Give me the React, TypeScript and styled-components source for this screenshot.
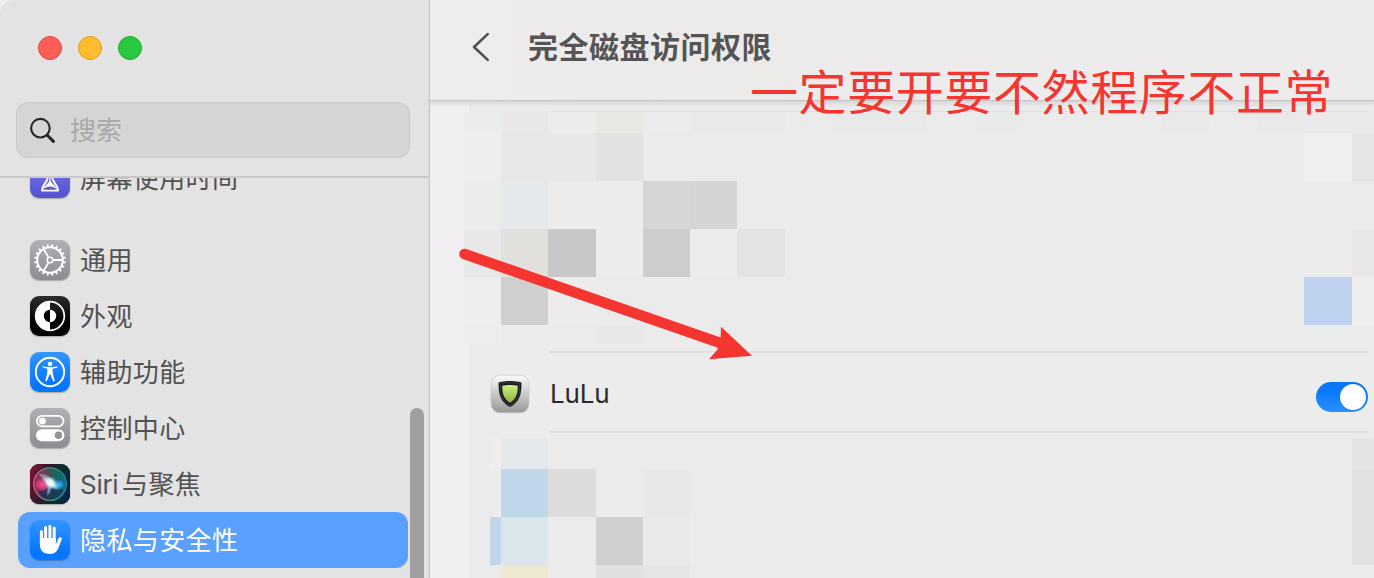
import React from 'react';
import styled, { createGlobalStyle } from 'styled-components';

const Global = createGlobalStyle`
  * { box-sizing: border-box; }
  html, body { margin: 0; padding: 0; background: #e3e3e3; }
  body { overflow: hidden; font-family: Inter, "Noto Sans CJK SC", sans-serif; }
  svg { display: block; }
`;

const Window = styled.div`
  position: relative;
  display: flex;
  width: 1374px;
  height: 578px;
  overflow: hidden;
  background: #f0eef0;
`;

const Sidebar = styled.aside`
  display: flex;
  flex-direction: column;
  width: 430px;
  height: 578px;
  flex: none;
  background: #e3e3e3;
  border-right: 1px solid #c9c7c8;
  border-top-left-radius: 14px;
  box-shadow: inset -1px 0 0 #dad9d9;
`;

const SidebarTop = styled.div`
  display: flex;
  flex-direction: column;
  height: 178px;
  width: 428px;
  flex: none;
  border-bottom: 2px solid #cac9ca;
`;

const Lights = styled.div`
  display: flex;
  gap: 16px;
  padding: 36px 0 42px 38px;
`;

const Light = styled.span<{ $fill: string; $edge: string }>`
  width: 24px;
  height: 24px;
  border-radius: 50%;
  background: ${p => p.$fill};
  border: 1px solid ${p => p.$edge};
`;

const Search = styled.div`
  display: flex;
  align-items: center;
  gap: 13px;
  width: 394px;
  height: 56px;
  margin-left: 16px;
  padding-left: 13px;
  border: 1px solid #c9c9c9;
  border-radius: 12px;
  background: #d5d5d5;
  color: #a9a9a9;
  font-size: 26px;
  line-height: 54px;
`;

const SearchLabel = styled.span`
  height: 54px;
  padding-top: 1px;
`;

const NavArea = styled.div`
  display: flex;
  flex: 1;
  min-height: 0;
  justify-content: space-between;
  overflow: hidden;
`;

const Nav = styled.nav`
  display: flex;
  flex-direction: column;
  width: 390px;
  margin-left: 18px;
  margin-top: -28px;
`;

const NavItem = styled.div<{ $active?: boolean; $gapAfter?: boolean }>`
  display: flex;
  flex: none;
  align-items: center;
  gap: 10px;
  height: 56px;
  padding-left: 12px;
  margin-bottom: ${p => (p.$gapAfter ? 26 : 0)}px;
  border-radius: 12px;
  background: ${p => (p.$active ? '#5aa0fe' : 'transparent')};
  color: ${p => (p.$active ? '#fff' : '#525252')};
  font-size: 26px;
  letter-spacing: 0.4px;
  line-height: 58px;
  white-space: pre;
`;

const NavLabel = styled.span`
  height: 56px;
`;

const Latin = styled.span`
  margin-right: 1px;
  letter-spacing: -0.3px;
`;

const IconTile = styled.span<{ $bg: string }>`
  width: 40px;
  height: 40px;
  border-radius: 9px;
  background: ${p => p.$bg};
  box-shadow: 0 1px 1.5px rgba(0, 0, 0, 0.28);
  overflow: hidden;
`;

const Scrollbar = styled.div`
  width: 14px;
  height: 200px;
  margin: 230px 5px 0 0;
  border-radius: 7px;
  background: #a09e9f;
`;

const Main = styled.main`
  display: flex;
  flex-direction: column;
  flex: 1;
  min-width: 0;
`;

const Header = styled.header`
  display: flex;
  align-items: center;
  flex: none;
  height: 101px;
  padding: 0 0 6px 42px;
  gap: 38px;
  border-bottom: 1px solid #c5c4c5;
  background: linear-gradient(90deg, #eeecee 0, #ecebea 300px, #edebec 420px);
`;

const Title = styled.h1`
  margin: 0;
  color: #555;
  font-size: 30px;
  line-height: 44px;
  font-weight: 700;
  letter-spacing: 0.5px;
`;

const Content = styled.div`
  display: flex;
  flex-direction: column;
  flex: 1;
  background: linear-gradient(#d9d8d9 0, rgba(236, 235, 236, 0) 6px);
`;

const CardSlice = styled.div<{ $height: number }>`
  flex: none;
  height: ${p => p.$height}px;
  margin-left: 40px;
  padding: 0 6px 0 79px;
  border-left: 1px solid #dfdfdf;
  background: rgba(235, 235, 235, 0.9);
`;

const CardTop = styled(CardSlice)`
  background: linear-gradient(rgba(215, 214, 215, 0.8), rgba(235, 235, 235, 0.9) 6px);
`;

const AppSlice = styled(CardSlice)`
  padding-top: 7px;
`;

const Rule = styled.div<{ $offset?: number; $thick?: number }>`
  height: ${p => p.$thick ?? 2}px;
  margin-top: ${p => p.$offset ?? 0}px;
  background: #e1e1e1;
`;

const AppRow = styled.div`
  display: flex;
  align-items: center;
  height: 78px;
  margin-left: -60px;
  padding-top: 3px;
`;

const AppName = styled.span`
  flex: 1;
  margin-left: 20px;
  color: #2a2a2a;
  font-size: 26px;
  line-height: 40px;
  letter-spacing: -0.2px;
`;

const Toggle = styled.span`
  display: flex;
  justify-content: flex-end;
  width: 52px;
  height: 30px;
  margin-top: 7px;
  padding: 2px;
  border-radius: 15px;
  background: linear-gradient(#0a76f6, #0a7aff 35%, #2a90ff);
`;

const Knob = styled.span`
  width: 26px;
  height: 26px;
  border-radius: 50%;
  background: #fff;
  box-shadow: 0 0 1px rgba(0, 0, 0, 0.4);
`;

const Mosaic = styled.div<{ $left: number; $first: number; $rows: string }>`
  display: grid;
  flex: none;
  margin-left: ${p => p.$left}px;
  grid-template-columns: ${p => p.$first}px 47px 48px 47px 47px 47px 48px 47px 47px 48px 47px 47px 48px 47px 47px 47px 47px 47px 48px 22px;
  grid-template-rows: ${p => p.$rows};
  background: #ecebec;
`;

const Pixel = styled.span<{ $row: number; $col: number; $span?: number; $color: string }>`
  grid-row: ${p => p.$row};
  grid-column: ${p => p.$col} / span ${p => p.$span ?? 1};
  background: ${p => p.$color};
`;

const SecondBlock = styled.div`
  display: flex;
  flex: 1;
  flex-direction: column;
  margin-left: 40px;
  border-left: 1px solid #dfdfdf;
  background: #ebebeb;
`;

const Arrow = styled.svg`
  position: absolute;
  left: 450px;
  top: 240px;
`;

const Note = styled.div`
  position: absolute;
  left: 750px;
  top: 54px;
  color: #f5352f;
  font-family: "Noto Sans CJK SC", sans-serif;
  font-size: 48px;
  font-weight: 400;
  line-height: 70px;
  letter-spacing: 0.6px;
  white-space: nowrap;
`;

type Cell = [row: number, col: number, color: string, span?: number];

const upperCells: Cell[] = [
  [1, 1, '#ebecec'], [1, 2, '#e9e7e8'], [1, 3, '#edebec'], [1, 4, '#e8e7e4'], [1, 5, '#edebec'], [1, 6, '#e8e9e8', 2],
  [1, 9, '#e8e9e9', 2], [1, 12, '#e9eaea'], [1, 16, '#e8e9e9'], [1, 18, '#e8e9e8'], [1, 19, '#ebe9ea'], [1, 20, '#e9e9e9'],
  [2, 1, '#efedee'], [2, 2, '#e8e6e7'], [2, 3, '#e8e8e8'], [2, 4, '#e3e1e2'], [2, 5, '#ebebeb'], [2, 19, '#efefef'], [2, 20, '#e6e4e5'],
  [3, 1, '#ebecec'], [3, 2, '#e6e9eb'], [3, 3, '#edebec', 2], [3, 5, '#d6d6d6'], [3, 6, '#d6d3d4'],
  [4, 1, '#e7e8e7'], [4, 2, '#e1e0dd'], [4, 3, '#c8c8c8'], [4, 4, '#edebec'], [4, 5, '#cfcccd'], [4, 6, '#edebec'], [4, 7, '#e3e3e3'], [4, 20, '#e8e6e7'],
  [5, 1, '#efedee'], [5, 2, '#cfcfcf'], [5, 3, '#edebec'], [5, 19, '#bfd2f0'], [5, 20, '#efedee'],
  [6, 1, '#eeecee'], [6, 2, '#ecebeb'], [6, 4, '#e9e7e8'], [6, 20, '#ebebeb'],
];

const lowerCells: Cell[] = [
  [1, 1, '#efedee'], [1, 2, '#e4e8ea'], [1, 20, '#e5e3e4'],
  [2, 1, '#ececec'], [2, 2, '#c0d6ea'], [2, 3, '#dedbdc'], [2, 5, '#e7e8e7'], [2, 20, '#e2e1e1'],
  [3, 1, '#c2d6e8'], [3, 2, '#dae5ec'], [3, 4, '#cfcfcf'], [3, 5, '#eae8e9'], [3, 20, '#e2e1e1'],
  [4, 2, '#eee8d0'], [4, 4, '#e1dfe0'], [4, 5, '#e6e4e5'],
];

const Pixels = ({ cells }: { cells: Cell[] }) => (
  <>
    {cells.map(([row, col, color, span]) => (
      <Pixel key={`${row}-${col}`} $row={row} $col={col} $color={color} $span={span} />
    ))}
  </>
);

const SearchIcon = () => (
  <svg width="27" height="27" viewBox="0 0 27 27" fill="none" stroke="#262626" strokeLinecap="round">
    <circle cx="10.4" cy="11.2" r="9.3" strokeWidth="2.1" />
    <path d="M17.3 18.2 L23.4 24.4" strokeWidth="3" />
  </svg>
);

const HourglassIcon = () => (
  <svg width="40" height="40" viewBox="0 0 40 40" fill="none" stroke="#fff" strokeWidth="1.9" strokeLinejoin="round">
    <path d="M12 7 H28 M13 7 C13 13 17.8 15 17.8 19 C17.8 24.5 12 26 12 32.6 H28 C28 26 22.2 24.5 22.2 19 C22.2 15 27 13 27 7" />
    <path d="M20 17 V24" strokeWidth="1.2" />
    <path d="M20 22 C20.6 25 26 27.5 26.6 31 C23 27.6 17 27.6 13.4 31 C14 27.5 19.4 25 20 22 Z" fill="#fff" stroke="none" />
  </svg>
);

const GearIcon = () => (
  <svg width="40" height="40" viewBox="0 0 40 40" fill="none" stroke="#fff">
    <circle cx="20" cy="20" r="12.8" strokeWidth="2" />
    {Array.from({ length: 20 }, (_, i) => (
      <path key={i} d="M32.6 18.7 L35.9 19.3 V20.7 L32.6 21.3 Z" fill="#fff" stroke="none" transform={`rotate(${i * 18 + 9} 20 20)`} />
    ))}
    <circle cx="20" cy="20" r="2.8" strokeWidth="1.6" />
    <path d="M22.8 20 H32.6 M18.6 17.6 L13.7 9.1 M18.6 22.4 L13.7 30.9" strokeWidth="1.9" />
  </svg>
);

const AppearanceIcon = () => (
  <svg width="40" height="40" viewBox="0 0 40 40">
    <circle cx="20" cy="20" r="14.3" fill="none" stroke="#fff" strokeWidth="1.7" />
    <path d="M20 5.5 A14.5 14.5 0 0 0 20 34.5 Z" fill="#fff" />
    <path d="M20 13.8 A6.2 6.2 0 0 0 20 26.2 Z" fill="#000" />
    <path d="M20 13.8 A6.2 6.2 0 0 1 20 26.2 Z" fill="#fff" />
  </svg>
);

const AccessibilityIcon = () => (
  <svg width="40" height="40" viewBox="0 0 40 40">
    <circle cx="20" cy="20" r="14.2" fill="none" stroke="#fff" strokeWidth="1.9" />
    <circle cx="20" cy="12" r="2.3" fill="#fff" />
    <path
      d="M12.6 15 C12.6 14.4 13.1 14.3 13.6 14.4 C18 15.2 22 15.2 26.4 14.4 C26.9 14.3 27.4 14.4 27.4 15 C27.4 15.5 27.1 15.7 26.6 15.8 L22.6 16.7 C22.5 20 22.8 22 24.6 28.2 C24.8 28.9 24.5 29.3 24 29.4 C23.5 29.5 23.1 29.2 22.9 28.6 L20.4 22.6 H19.6 L17.1 28.6 C16.9 29.2 16.5 29.5 16 29.4 C15.5 29.3 15.2 28.9 15.4 28.2 C17.2 22 17.5 20 17.4 16.7 L13.4 15.8 C12.9 15.7 12.6 15.5 12.6 15 Z"
      fill="#fff"
    />
  </svg>
);

const ControlIcon = () => (
  <svg width="40" height="40" viewBox="0 0 40 40">
    <rect x="6.9" y="7.9" width="26.6" height="10.4" rx="5.2" fill="none" stroke="#fff" strokeWidth="1.8" />
    <circle cx="12.4" cy="13.1" r="3.4" fill="#fff" />
    <rect x="6" y="21.3" width="28.4" height="12" rx="6" fill="#fff" />
    <circle cx="28.5" cy="27.2" r="3.7" fill="#929196" />
  </svg>
);

const SiriIcon = () => (
  <svg width="40" height="40" viewBox="0 0 40 40">
    <defs>
      <linearGradient id="siriBase" x1="0" y1="0.25" x2="1" y2="0.6">
        <stop offset="0" stopColor="#7d1136" />
        <stop offset="0.42" stopColor="#241a2c" />
        <stop offset="0.75" stopColor="#04312f" />
        <stop offset="1" stopColor="#062446" />
      </linearGradient>
      <linearGradient id="siriOrb" x1="0" y1="0.45" x2="1" y2="0.55">
        <stop offset="0" stopColor="#c42f68" />
        <stop offset="0.4" stopColor="#64606e" />
        <stop offset="0.65" stopColor="#128a72" />
        <stop offset="1" stopColor="#1c7fae" />
      </linearGradient>
      <linearGradient id="siriRing" x1="0" y1="0.6" x2="1" y2="0.4">
        <stop offset="0" stopColor="#e0668c" />
        <stop offset="0.5" stopColor="#3fae88" />
        <stop offset="1" stopColor="#2c88a4" />
      </linearGradient>
      <radialGradient id="siriGlow">
        <stop offset="0" stopColor="#fff" />
        <stop offset="0.35" stopColor="#e9fbff" stopOpacity="0.85" />
        <stop offset="1" stopColor="#b9e4ff" stopOpacity="0" />
      </radialGradient>
      <radialGradient id="siriPink">
        <stop offset="0" stopColor="#ff5c8c" stopOpacity="0.95" />
        <stop offset="0.7" stopColor="#e83a78" stopOpacity="0.7" />
        <stop offset="1" stopColor="#d0306c" stopOpacity="0.1" />
      </radialGradient>
      <radialGradient id="siriBlue">
        <stop offset="0" stopColor="#4cc4f4" stopOpacity="0.9" />
        <stop offset="0.7" stopColor="#238cdc" stopOpacity="0.7" />
        <stop offset="1" stopColor="#1c74c8" stopOpacity="0.1" />
      </radialGradient>
    </defs>
    <rect width="40" height="40" fill="url(#siriBase)" />
    <circle cx="20" cy="20" r="16.3" fill="url(#siriOrb)" fillOpacity="0.65" stroke="url(#siriRing)" strokeWidth="1.1" />
    <path d="M8 26 C12 29 17 25 20 20 C24 25 29 27 33.5 25 C31 33 25 35.6 20 35.6 C14 35.6 10 32 8 26 Z" fill="#182a55" fillOpacity="0.7" />
    <ellipse cx="12.5" cy="20.5" rx="8" ry="6.6" fill="url(#siriPink)" />
    <ellipse cx="28.3" cy="20.5" rx="6.8" ry="5.2" fill="url(#siriBlue)" />
    <path d="M9 10 C17 9 22 14 24 20 C17 20 12 16 9 10 Z" fill="#e0dfe4" fillOpacity="0.35" />
    <ellipse cx="20.5" cy="19" rx="11" ry="4.6" fill="url(#siriGlow)" transform="rotate(38 20.5 19)" />
    <ellipse cx="20.5" cy="19" rx="6.6" ry="7" fill="url(#siriGlow)" />
    <ellipse cx="19" cy="26" rx="2.4" ry="7" fill="url(#siriGlow)" fillOpacity="0.5" transform="rotate(14 19 26)" />
  </svg>
);

const HandIcon = () => (
  <svg width="40" height="40" viewBox="0 0 40 40" fill="none" stroke="#fff" strokeLinecap="round">
    <path d="M11.4 11.6 V24 M15.6 7.4 V22 M19.9 6.2 V22 M24.2 8 V22" strokeWidth="3" />
    <path d="M9.9 18 H25.7 V24.4 L28.6 18 C29.3 16.6 32.4 16.9 31.8 18.9 L28.6 27.6 C26.6 32.4 24.2 34 20 34 C13 34 9.9 30.4 9.9 24 Z" fill="#fff" stroke="none" />
  </svg>
);

const ShieldIcon = () => (
  <svg width="40" height="40" viewBox="0 0 40 40">
    <defs>
      <linearGradient id="plate" x1="0" y1="0" x2="0" y2="1">
        <stop offset="0" stopColor="#fafafa" />
        <stop offset="0.5" stopColor="#c9c9c9" />
        <stop offset="1" stopColor="#989898" />
      </linearGradient>
      <linearGradient id="leaf" x1="0" y1="0" x2="0" y2="1">
        <stop offset="0" stopColor="#cdf07c" />
        <stop offset="1" stopColor="#8db344" />
      </linearGradient>
    </defs>
    <rect x="1" y="1.2" width="38" height="37.6" rx="9" fill="url(#plate)" stroke="#c4c4c4" strokeWidth="0.6" />
    <path d="M20 7 C24 7 28 7.6 31.4 8.4 C31.8 20 29.5 28.2 20 33 C10.5 28.2 8.2 20 8.6 8.4 C12 7.6 16 7 20 7 Z" fill="#1d1d20" />
    <path d="M20 8.6 C24 8.6 27 9.1 29.8 9.7 C30 20 28 27 20 31.3 C12 27 10 20 10.2 9.7 C13 9.1 16 8.6 20 8.6 Z" fill="none" stroke="#46464a" strokeWidth="0.7" />
    <path d="M20 10.9 C23 10.9 25.4 11.2 27.7 11.6 C27.9 19.5 26.3 25 20 28.8 C13.7 25 12.1 19.5 12.3 11.6 C14.6 11.2 17 10.9 20 10.9 Z" fill="url(#leaf)" />
  </svg>
);

const items = [
  { label: '屏幕使用时间', bg: 'linear-gradient(#7d7be8, #5450d2)', icon: <HourglassIcon />, gapAfter: true },
  { label: '通用', bg: 'linear-gradient(#b1b0b5, #8c8b91)', icon: <GearIcon /> },
  { label: '外观', bg: 'linear-gradient(#2c2c2c, #000 70%)', icon: <AppearanceIcon /> },
  { label: '辅助功能', bg: 'linear-gradient(#3395ff, #0576ff 80%)', icon: <AccessibilityIcon /> },
  { label: '控制中心', bg: 'linear-gradient(#b1b0b5, #8c8b91)', icon: <ControlIcon /> },
  { latin: 'Siri', label: '\u200a与聚焦', bg: '#102', icon: <SiriIcon /> },
  { label: '隐私与安全性', bg: 'linear-gradient(#3395ff, #0576ff 80%)', icon: <HandIcon />, active: true },
];

export default function App() {
  return (
    <>
      <Global />
      <Window>
        <Sidebar>
          <SidebarTop>
            <Lights>
              <Light $fill="#ff5f57" $edge="#e2463f" />
              <Light $fill="#febc2e" $edge="#e09e21" />
              <Light $fill="#28c840" $edge="#1dad2b" />
            </Lights>
            <Search>
              <SearchIcon />
              <SearchLabel>搜索</SearchLabel>
            </Search>
          </SidebarTop>
          <NavArea>
            <Nav>
              {items.map(item => (
                <NavItem key={item.label} $active={item.active} $gapAfter={item.gapAfter}>
                  <IconTile $bg={item.bg}>{item.icon}</IconTile>
                  <NavLabel>
                    {item.latin && <Latin>{item.latin}</Latin>}
                    {item.label}
                  </NavLabel>
                </NavItem>
              ))}
            </Nav>
            <Scrollbar />
          </NavArea>
        </Sidebar>
        <Main>
          <Header>
            <svg width="18" height="30" viewBox="0 0 18 30" fill="none" stroke="#505050" strokeWidth="2.6" strokeLinecap="round" strokeLinejoin="round">
              <path d="M15.7 2.1 L2 15 L15.7 27.9" />
            </svg>
            <Title>完全磁盘访问权限</Title>
          </Header>
          <Content>
            <CardTop $height={11}>
              <Rule $offset={10} $thick={1} />
            </CardTop>
            <Mosaic $left={34} $first={37} $rows="21px 48px 48px 48px 48px 19px">
              <Pixels cells={upperCells} />
            </Mosaic>
            <AppSlice $height={94}>
              <Rule />
              <AppRow>
                <ShieldIcon />
                <AppName>LuLu</AppName>
                <Toggle>
                  <Knob />
                </Toggle>
              </AppRow>
              <Rule />
            </AppSlice>
            <SecondBlock>
              <Mosaic $left={19} $first={11} $rows="31px 48px 48px 13px">
                <Pixels cells={lowerCells} />
              </Mosaic>
            </SecondBlock>
          </Content>
        </Main>
        <Arrow width="310" height="125" viewBox="0 0 310 125">
          <path d="M14.5 14 L276 105" stroke="#f5352f" strokeWidth="10.5" strokeLinecap="round" />
          <path d="M302 115.7 L259 119.2 L267.5 109.5 L270.5 99.5 L271 86.8 Z" fill="#f5352f" />
        </Arrow>
        <Note>一定要开要不然程序不正常</Note>
      </Window>
    </>
  );
}
